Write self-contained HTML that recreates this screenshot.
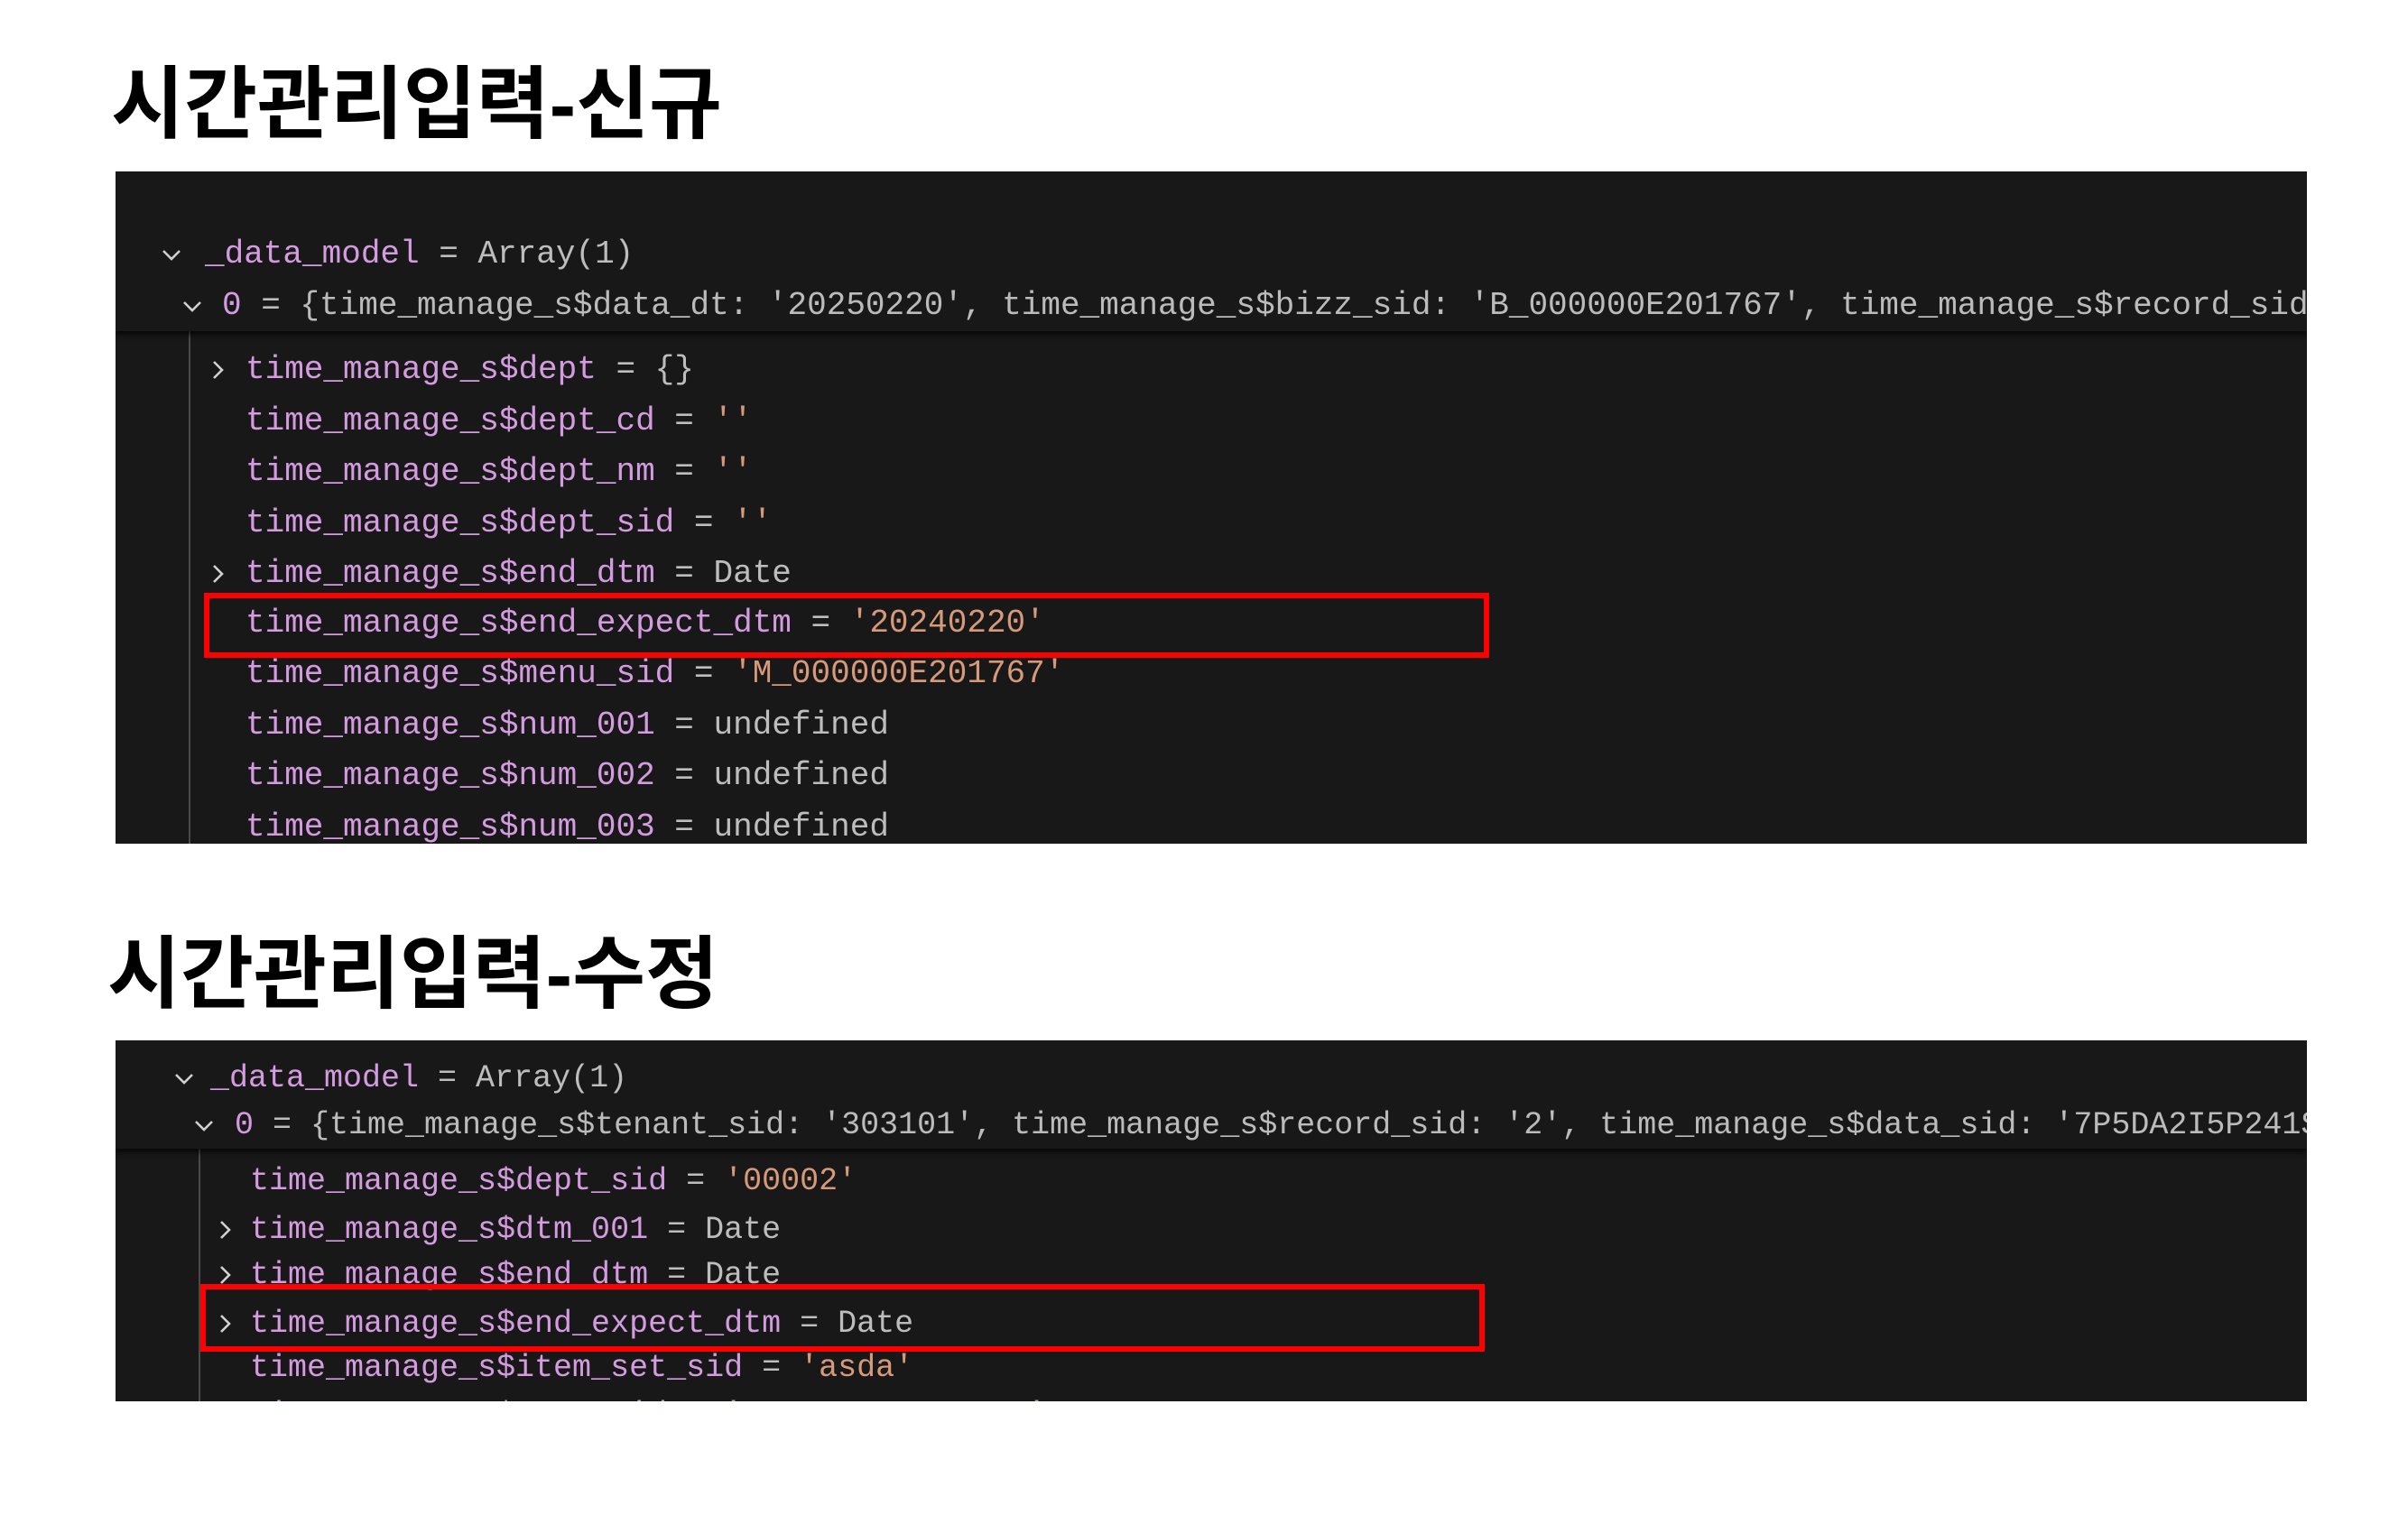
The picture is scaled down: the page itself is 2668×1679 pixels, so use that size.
<!DOCTYPE html>
<html><head><meta charset="utf-8"><style>
body{margin:0;width:2668px;height:1679px;background:#fff;position:relative;overflow:hidden}
.t{position:absolute;font-family:"Liberation Sans","Noto Sans CJK KR",sans-serif;font-weight:bold;font-size:88px;line-height:1;color:#000;transform-origin:0 0;transform:scaleX(1.0);white-space:nowrap}
.p{position:absolute;background:#181818;overflow:hidden}
.l{position:absolute;white-space:pre;font-family:"Liberation Mono",monospace;color:#bdbdbd;line-height:1}
.k{color:#d59be0}.s{color:#d6997a}.n{color:#d59be0}.g{color:#bbbbbb}
.hd{position:absolute;left:0;right:0;top:0;background:#181818;box-shadow:0 4px 6px rgba(0,0,0,.7)}
.guide{position:absolute;width:2px;background:#4a4a4a}
.box{position:absolute;border:6px solid #f00;box-sizing:border-box}
svg.c{position:absolute;width:24px;height:24px}
svg.c path{fill:none;stroke:#d0d0d0;stroke-width:2.6}
</style></head><body>
<div class="t" style="left:123px;top:72px">시간관리입력-신규</div>
<div class="t" style="left:119px;top:1036px">시간관리입력-수정</div>

<div class="p" style="left:128px;top:190px;width:2428px;height:745px">
  <div class="guide" style="left:81px;top:170px;bottom:0"></div>
  <svg class="c" style="left:102px;top:208px" viewBox="0 0 24 24"><path d="M7 3l9 9-9 9"/></svg>
  <div class="l" style="left:144px;top:202px;font-size:36px"><span class="k">time_manage_s$dept</span> = {}</div>
  <div class="l" style="left:144px;top:259px;font-size:36px"><span class="k">time_manage_s$dept_cd</span> = <span class="s">''</span></div>
  <div class="l" style="left:144px;top:315px;font-size:36px"><span class="k">time_manage_s$dept_nm</span> = <span class="s">''</span></div>
  <div class="l" style="left:144px;top:372px;font-size:36px"><span class="k">time_manage_s$dept_sid</span> = <span class="s">''</span></div>
  <svg class="c" style="left:102px;top:434px" viewBox="0 0 24 24"><path d="M7 3l9 9-9 9"/></svg>
  <div class="l" style="left:144px;top:428px;font-size:36px"><span class="k">time_manage_s$end_dtm</span> = Date</div>
  <div class="l" style="left:144px;top:483px;font-size:36px"><span class="k">time_manage_s$end_expect_dtm</span> = <span class="s">'20240220'</span></div>
  <div class="l" style="left:144px;top:539px;font-size:36px"><span class="k">time_manage_s$menu_sid</span> = <span class="s">'M_000000E201767'</span></div>
  <div class="l" style="left:144px;top:596px;font-size:36px"><span class="k">time_manage_s$num_001</span> = undefined</div>
  <div class="l" style="left:144px;top:652px;font-size:36px"><span class="k">time_manage_s$num_002</span> = undefined</div>
  <div class="l" style="left:144px;top:709px;font-size:36px"><span class="k">time_manage_s$num_003</span> = undefined</div>
  <div class="hd" style="height:177px">
    <svg class="c" style="left:50px;top:80px" viewBox="0 0 24 24"><path d="M3 8l9 9 9-9"/></svg>
    <div class="l" style="left:99px;top:74px;font-size:36px"><span class="k">_data_model</span> = Array(1)</div>
    <svg class="c" style="left:73px;top:137px" viewBox="0 0 24 24"><path d="M3 8l9 9 9-9"/></svg>
    <div class="l g" style="left:118px;top:131px;font-size:36px"><span class="n">0</span> = {time_manage_s$data_dt: '20250220', time_manage_s$bizz_sid: 'B_000000E201767', time_manage_s$record_sid: '1'</div>
  </div>
  <div class="box" style="left:98px;top:467px;width:1424px;height:72px"></div>
</div>

<div class="p" style="left:128px;top:1153px;width:2428px;height:400px">
  <div class="guide" style="left:92px;top:120px;bottom:0"></div>
  <div class="l" style="left:149px;top:139px;font-size:35px"><span class="k">time_manage_s$dept_sid</span> = <span class="s">'00002'</span></div>
  <svg class="c" style="left:110px;top:198px" viewBox="0 0 24 24"><path d="M7 3l9 9-9 9"/></svg>
  <div class="l" style="left:149px;top:193px;font-size:35px"><span class="k">time_manage_s$dtm_001</span> = Date</div>
  <svg class="c" style="left:110px;top:248px" viewBox="0 0 24 24"><path d="M7 3l9 9-9 9"/></svg>
  <div class="l" style="left:149px;top:243px;font-size:35px"><span class="k">time_manage_s$end_dtm</span> = Date</div>
  <svg class="c" style="left:110px;top:302px" viewBox="0 0 24 24"><path d="M7 3l9 9-9 9"/></svg>
  <div class="l" style="left:149px;top:297px;font-size:35px"><span class="k">time_manage_s$end_expect_dtm</span> = Date</div>
  <div class="l" style="left:149px;top:346px;font-size:35px"><span class="k">time_manage_s$item_set_sid</span> = <span class="s">'asda'</span></div>
  <div class="l" style="left:149px;top:398px;font-size:35px"><span class="k">time_manage_s$menu_sid</span> = <span class="s">'M_000000E201767'</span></div>
  <div class="hd" style="height:120px">
    <svg class="c" style="left:64px;top:30px" viewBox="0 0 24 24"><path d="M3 8l9 9 9-9"/></svg>
    <div class="l" style="left:105px;top:25px;font-size:35px"><span class="k">_data_model</span> = Array(1)</div>
    <svg class="c" style="left:86px;top:82px" viewBox="0 0 24 24"><path d="M3 8l9 9 9-9"/></svg>
    <div class="l g" style="left:132px;top:77px;font-size:35px"><span class="n">0</span> = {time_manage_s$tenant_sid: '303101', time_manage_s$record_sid: '2', time_manage_s$data_sid: '7P5DA2I5P241SPF'</div>
  </div>
  <div class="box" style="left:94px;top:270px;width:1423px;height:75px"></div>
</div>
</body></html>
